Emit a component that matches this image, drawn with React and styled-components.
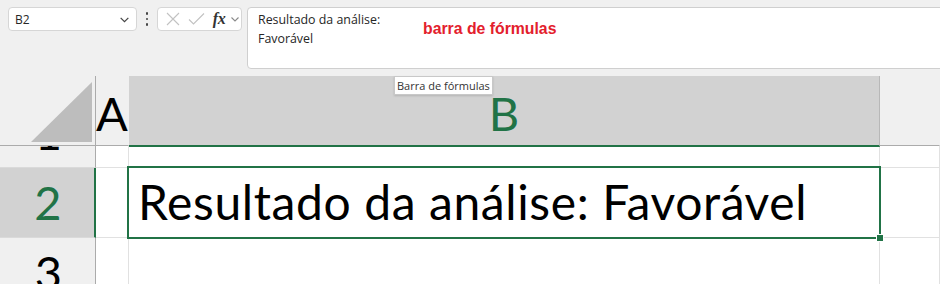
import React from "react";
import styled, { createGlobalStyle } from "styled-components";

const GREEN = "#217346";

const Global = createGlobalStyle`
  html, body { margin: 0; padding: 0; background: #f0f0f0; }
  body { font-family: "Open Sans", "Noto Sans", sans-serif; }
`;

const Page = styled.div`
  position: relative;
  width: 940px;
  height: 284px;
  overflow: hidden;
  background: #f0f0f0;
  display: flex;
  flex-direction: column;
`;

const Toolbar = styled.div`
  flex: none;
  height: 76px;
  box-sizing: border-box;
  padding: 7px 0 0 8px;
  display: flex;
  align-items: flex-start;
  background: #f0f0f0;
`;

const NameBox = styled.div`
  width: 129px;
  height: 24px;
  box-sizing: border-box;
  background: #fff;
  border: 1px solid #d6d6d6;
  border-radius: 4px;
  display: flex;
  align-items: center;
  justify-content: space-between;
  padding: 0 6px 0 6px;
  font-size: 12px;
  color: #262626;
`;

const Kebab = styled.div`
  width: 20px;
  height: 24px;
  display: flex;
  flex-direction: column;
  align-items: center;
  justify-content: center;
  gap: 3px;
  & > span {
    width: 2.4px;
    height: 2.4px;
    border-radius: 50%;
    background: #444;
  }
`;

const FxBox = styled.div`
  width: 85px;
  height: 24px;
  box-sizing: border-box;
  background: #fff;
  border: 1px solid #d6d6d6;
  border-radius: 4px;
  display: flex;
  align-items: center;
  padding: 0 0 0 5px;
`;

const IconSlot = styled.span`
  width: ${(p) => p.$w}px;
  height: 22px;
  display: flex;
  align-items: center;
  justify-content: center;
`;

const FxText = styled.span`
  font-family: "Liberation Serif", "DejaVu Serif", serif;
  font-style: italic;
  font-weight: bold;
  font-size: 16px;
  color: #333;
  letter-spacing: -0.5px;
  width: 20px;
  text-align: center;
  line-height: 22px;
`;

const FormulaBar = styled.div`
  flex: 1;
  margin-left: 5px;
  margin-right: -10px;
  height: 62px;
  box-sizing: border-box;
  background: #fff;
  border: 1px solid #cfcfcf;
  border-radius: 4px;
  padding: 2px 10px;
  display: flex;
  align-items: flex-start;
`;

const FormulaText = styled.div`
  width: 165px;
  font-size: 12.4px;
  line-height: 19px;
  color: #262626;
`;

const Annotation = styled.div`
  margin-top: 10px;
  font-family: "Liberation Sans", Arial, sans-serif;
  font-weight: bold;
  font-size: 15.8px;
  color: #e3202c;
`;

const Tooltip = styled.div`
  position: absolute;
  left: 394px;
  top: 76px;
  height: 19px;
  box-sizing: border-box;
  padding: 0 2px;
  background: #fff;
  border: 1px solid #c8c8c8;
  box-shadow: 0 1px 2px rgba(0, 0, 0, 0.15);
  font-size: 11px;
  line-height: 17px;
  color: #333;
  z-index: 5;
`;

const Sheet = styled.div`
  flex: none;
  display: grid;
  grid-template-columns: 96px 33px 751px 1fr;
  grid-template-rows: 70px 22px 70px 70px;
  font-family: "Lato", "Open Sans", sans-serif;
`;

const Corner = styled.div`
  background: #f0f0f0;
  border-right: 1px solid #ababab;
  border-bottom: 1px solid #ababab;
  box-sizing: border-box;
  & > svg { display: block; }
`;

const ColHeader = styled.div`
  box-sizing: border-box;
  background: ${(p) => (p.$selected ? "#d2d2d2" : "#f0f0f0")};
  border-bottom: ${(p) => (p.$selected ? `2px solid ${GREEN}` : "1px solid #ababab")};
  border-right: 1px solid ${(p) => (p.$selected ? "#b8b8b8" : "transparent")};
  margin-bottom: ${(p) => (p.$selected ? "-1px" : "0")};
  display: flex;
  align-items: center;
  justify-content: center;
  padding-top: 4px;
  font-size: 47px;
  color: ${(p) => (p.$selected ? GREEN : "#000")};
  white-space: nowrap;
  position: relative;
  z-index: 1;
`;

const RowHeader = styled.div`
  box-sizing: border-box;
  background: ${(p) => (p.$selected ? "#d2d2d2" : "#f0f0f0")};
  border-right: ${(p) => (p.$selected ? `2px solid ${GREEN}` : "1px solid #ababab")};
  border-bottom: 1px solid #dadada;
  overflow: hidden;
  display: flex;
  flex-direction: column;
  justify-content: flex-end;
`;

const RowLabel = styled.div`
  height: 70px;
  flex: none;
  display: flex;
  align-items: center;
  justify-content: center;
  font-size: 47px;
  line-height: 1;
  padding-left: 2px;
  color: ${(p) => (p.$selected ? GREEN : "#000")};
`;

const Cell = styled.div`
  position: relative;
  box-sizing: border-box;
  background: #fff;
  border-right: 1px solid #e1e1e1;
  border-bottom: 1px solid #e1e1e1;
  white-space: nowrap;
`;

const ActiveCell = styled(Cell)`
  display: flex;
  align-items: flex-end;
  padding: 0 0 6px 9px;
  font-size: 48px;
  letter-spacing: 0.6px;
  line-height: 1.2;
  color: #000;
  &::after {
    content: "";
    position: absolute;
    left: -2px;
    top: -2px;
    right: -2px;
    bottom: -2px;
    border: 2px solid ${GREEN};
    z-index: 2;
  }
`;

const FillHandle = styled.span`
  position: absolute;
  right: -5px;
  bottom: -5px;
  width: 6px;
  height: 6px;
  background: ${GREEN};
  border: 1px solid #fff;
  z-index: 3;
`;

const Chevron = ({ color = "#555", size = 10 }) => (
  <svg width={size} height={size} viewBox="0 0 10 10">
    <path d="M1.5 3.5 L5 7 L8.5 3.5" fill="none" stroke={color} strokeWidth="1.1" />
  </svg>
);

export default function App() {
  return (
    <Page>
      <Global />
      <Toolbar>
        <NameBox>
          <span>B2</span>
          <Chevron color="#444" size={11} />
        </NameBox>
        <Kebab>
          <span />
          <span />
          <span />
        </Kebab>
        <FxBox>
          <IconSlot $w={20}>
            <svg width="14" height="14" viewBox="0 0 14 14">
              <path d="M1 1 L13 13 M13 1 L1 13" stroke="#c2c2c2" strokeWidth="1.1" fill="none" />
            </svg>
          </IconSlot>
          <IconSlot $w={26}>
            <svg width="17" height="14" viewBox="0 0 17 14">
              <path d="M1 7.5 L5.5 12 L16 1.5" stroke="#c2c2c2" strokeWidth="1.1" fill="none" />
            </svg>
          </IconSlot>
          <FxText>fx</FxText>
          <IconSlot $w={12}>
            <Chevron color="#8a8a8a" size={10} />
          </IconSlot>
        </FxBox>
        <FormulaBar>
          <FormulaText>
            Resultado da análise:
            <br />
            Favorável
          </FormulaText>
          <Annotation>barra de fórmulas</Annotation>
        </FormulaBar>
      </Toolbar>
      <Tooltip>Barra de fórmulas</Tooltip>
      <Sheet>
        <Corner>
          <svg width="95" height="69" viewBox="0 0 95 69">
            <polygon points="31,66 92,6 92,66" fill="#bdbdbd" />
          </svg>
        </Corner>
        <ColHeader>A</ColHeader>
        <ColHeader $selected>B</ColHeader>
        <ColHeader />

        <RowHeader>
          <RowLabel>1</RowLabel>
        </RowHeader>
        <Cell />
        <Cell />
        <Cell />

        <RowHeader $selected>
          <RowLabel $selected>2</RowLabel>
        </RowHeader>
        <Cell />
        <ActiveCell>
          Resultado da análise: Favorável
          <FillHandle />
        </ActiveCell>
        <Cell />

        <RowHeader>
          <RowLabel>3</RowLabel>
        </RowHeader>
        <Cell />
        <Cell />
        <Cell />
      </Sheet>
    </Page>
  );
}
